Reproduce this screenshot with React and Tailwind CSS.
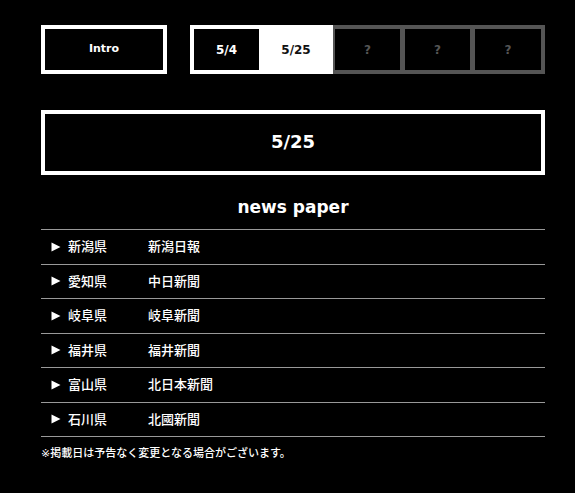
import React from "react";

const rows = [
  ["新潟県", "新潟日報"],
  ["愛知県", "中日新聞"],
  ["岐阜県", "岐阜新聞"],
  ["福井県", "福井新聞"],
  ["富山県", "北日本新聞"],
  ["石川県", "北國新聞"],
];

function Tri() {
  return (
    <svg width="10" height="10" viewBox="0 0 10 10" className="shrink-0">
      <polygon points="0.5,0.5 9.5,5 0.5,9.5" fill="#fff" />
    </svg>
  );
}

export default function App() {
  return (
    <div
      className="min-h-[493px] w-full bg-black text-white"
      style={{ fontFamily: '"DejaVu Sans", "Noto Sans CJK JP", sans-serif' }}
    >
      <div className="pl-[41px] pt-[25px] w-[545px]">
        {/* top nav */}
        <div className="flex h-[49px]">
          <div className="w-[126px] h-[49px] border-4 border-white bg-black flex items-center justify-center text-[11px] font-bold">
            Intro
          </div>
          <div className="ml-[23px] flex h-[49px]">
            <div className="w-[69px] border-l-4 border-y-4 border-white bg-black flex items-center justify-center text-[12px] font-bold">
              5/4
            </div>
            <div className="w-[74px] border-y-4 border-white bg-white text-[#111] flex items-center justify-center text-[12px] font-bold">
              5/25
            </div>
            <div className="w-[70px] border-y-4 border-l-2 border-r-[3px] border-[#555] bg-black text-[#555] flex items-center justify-center text-[12px] font-bold">
              ?
            </div>
            <div className="w-[70px] border-y-4 border-l-2 border-r-[3px] border-[#555] bg-black text-[#555] flex items-center justify-center text-[12px] font-bold">
              ?
            </div>
            <div className="w-[72px] border-y-4 border-l-2 border-r-4 border-[#555] bg-black text-[#555] flex items-center justify-center text-[12px] font-bold">
              ?
            </div>
          </div>
        </div>

        {/* date box */}
        <div className="mt-[36px] h-[65px] border-4 border-white flex items-center justify-center text-[18px] font-bold leading-none pb-[1px]">
          5/25
        </div>

        {/* title */}
        <h2 className="mt-[20px] h-[24px] leading-[24px] text-center text-[17px] font-bold">
          news paper
        </h2>

        <ul className="mt-[10px] border-t border-[#999]">
          {rows.map(([pref, paper]) => (
            <li
              key={pref}
              className="h-[34.5px] border-b border-[#999] flex items-center pl-[10px] text-[13px] font-medium"
            >
              <Tri />
              <span className="ml-[7px] w-[80px]">{pref}</span>
              <span>{paper}</span>
            </li>
          ))}
        </ul>

        <p className="mt-[9px] h-[16px] leading-[16px] text-[11px] font-medium">
          ※掲載日は予告なく変更となる場合がございます。
        </p>
      </div>
    </div>
  );
}
